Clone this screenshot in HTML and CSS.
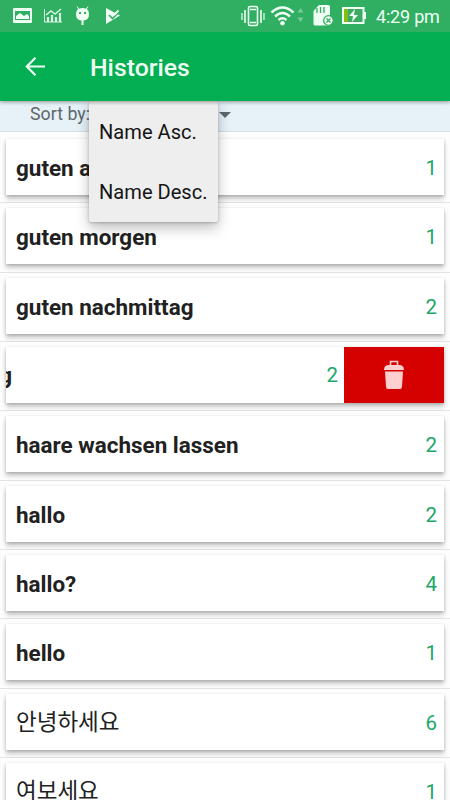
FILE: index.html
```html
<!DOCTYPE html>
<html lang="en">
<head>
<meta charset="utf-8">
<title>Histories</title>
<link rel="stylesheet" href="styles.css">
</head>
<body>
<header class="top">
  <div class="status">
    <svg class="status-left" width="125" height="32" viewBox="0 0 125 32" fill="#effff4">
      <path fill-rule="evenodd" d="M14 8h17q1 0 1 1v13q0 1-1 1H14q-1 0-1-1V9q0-1 1-1zm1 3v9h15v-9zM16 19v-3l4-3 4 3 3-2 2 2v3z" />
      <g fill="none" stroke="#d8f6e2"><path d="M44.5 9v13H62"/><path d="M48 22v-5m4 5v-7m4 7v-5m4 5v-9" stroke-width="2.2"/><path d="M46 15l5-4 4 3 6-5" stroke-width="1.5"/></g>
      <path fill-rule="evenodd" d="M76 14q0-6 6.500-6t6.500 6q0 6-5.500 6.500V25h-2v-4.500Q76 20 76 14zM79 12v2h2v-2zm5 0v2h2v-2z"/>
      <path d="M79 9.500l-2-3m9 3l2-3" stroke="#effff4"/>
      <path d="M106 8l14 7.500L106 24z"/><path d="M109 15l3.500 3.500 7-7" fill="none" stroke="#30ae61" stroke-width="1.600"/><path d="M114 15l4.500-4.500" stroke="#effff4" stroke-width="2"/>
    </svg>
    <svg class="status-right" width="130" height="32" viewBox="240 0 130 32">
      <g fill="none" stroke="#effff4" stroke-width="1.600"><rect x="248.500" y="6.500" width="9" height="19" rx="1.500"/><path d="M250 9.500h6m-6 13h6M245 10v13m16-13v13" /><path d="M242 13v7m22-7v7" stroke-width="1.200"/>
      <path d="M271.500 12.500q11-10 22 0M275 16.500q7.500-7 15 0M278.500 20q4-3.500 8 0" stroke-width="2.400"/></g>
      <circle cx="282.500" cy="23.300" r="2.200" fill="#effff4"/>
      <path d="M300.500 8l3 4.500h-6zm0 14l3-4.500h-6z" fill="#79cb98"/>
      <path d="M319 5h9q2 0 2 2v17q0 1.500-1.500 1.500H315q-1.500 0-1.500-1.500V11z" fill="#effff4"/>
      <path d="M317 8v5m3.500-6v6m3.500-6v6" stroke="#30ae61" stroke-width="1.300"/>
      <circle cx="328.500" cy="20.500" r="4.800" fill="#effff4" stroke="#30ae61" stroke-width="1.300"/><path d="M326.500 18.500l4 4m0-4l-4 4" stroke="#30ae61" stroke-width="1.300"/>
      <rect x="343" y="8" width="20.500" height="15" fill="#3daa61" stroke="#effff4" stroke-width="2"/><path d="M344 9h4v13h-4z" fill="#83bd12"/><path d="M364 12h2v7h-2z" fill="#effff4"/><path d="M355 9l-6 7h4l-1 6 6-7h-4z" fill="#effff4"/>
    </svg>
    <span class="clock">4:29 pm</span>
  </div>
  <div class="bar">
    <svg class="back" width="22" height="22" viewBox="0 0 22 22" fill="none" stroke="#effff4" stroke-width="2.200"><path d="M21 10.500H3M11.500 1.800L2.800 10.500l8.700 8.700"/></svg>
    <h1>Histories</h1>
  </div>
</header>
<section class="sort">
  <span>Sort by:</span><i class="caret"></i>
  <div class="menu"><div>Name Asc.</div><div>Name Desc.</div></div>
</section>
<main>
  <div class="row"><div class="card"><b>guten abend</b><span class="num">1</span></div></div>
  <div class="row"><div class="card"><b>guten morgen</b><span class="num">1</span></div></div>
  <div class="row"><div class="card"><b>guten nachmittag</b><span class="num">2</span></div></div>
  <div class="row"><div class="card swiped"><b>guten tag</b><span class="num">2</span><div class="delete"><svg width="22" height="30" viewBox="0 0 22 30" fill="#ffcece"><path d="M7.500 5V1.500h7V5" fill="none" stroke="#ffcece" stroke-width="1.600"/><path d="M1 10q0-5 5-5h10q5 0 5 5zM2 11.500h18l-1 15q-.2 2.500-2 2.500H5q-1.800 0-2-2.500z"/></svg></div></div></div>
  <div class="row"><div class="card"><b>haare wachsen lassen</b><span class="num">2</span></div></div>
  <div class="row"><div class="card"><b>hallo</b><span class="num">2</span></div></div>
  <div class="row"><div class="card"><b>hallo?</b><span class="num">4</span></div></div>
  <div class="row"><div class="card"><b>hello</b><span class="num">1</span></div></div>
  <div class="row"><div class="card"><span class="ko" lang="ko">안녕하세요</span><span class="num">6</span></div></div>
  <div class="row"><div class="card"><span class="ko" lang="ko">여보세요</span><span class="num">1</span></div></div>
</main>
</body>
</html>
```
FILE: styles.css
```css
* { box-sizing: border-box; }
body { margin: 0; width: 450px; height: 800px; overflow: hidden; background: #fff; font-family: Roboto, "Noto Sans CJK KR", sans-serif; display: flex; flex-direction: column; }
.top { flex: none; height: 101px; background: #04ae52; box-shadow: 0 1px 4px rgba(0,0,0,.4); z-index: 4; position: relative; }
.status { height: 32px; background: #30ae61; display: flex; align-items: center; }
.status-left { margin-right: 115px; }
.status svg { flex: none; }
.clock { color: #effff4; font-size: 18px; line-height: 32px; margin-left: 6px; padding-top: 1px; letter-spacing: -.2px; white-space: nowrap; }
.bar { height: 69px; display: flex; align-items: center; padding-left: 24px; }
.back { margin-right: 44px; }
h1 { margin: 3px 0 0; color: #effff4; font-size: 24.800px; font-weight: 500; line-height: 30px; }
.sort { flex: none; height: 31px; background: #e6f1f8; border-bottom: 1px solid #d4dde1; padding-left: 30px; display: flex; align-items: flex-start; position: relative; z-index: 3; color: #60676b; font-size: 17.800px; line-height: 26px; }
.sort span { width: 59px; white-space: nowrap; }
.caret { margin: 11px 0 0 130px; border: 6px solid transparent; border-top-color: #60676b; border-bottom: 0; }
.menu { position: absolute; left: 89px; top: 0; width: 129px; height: 121px; background: #eee; border-radius: 2px; box-shadow: 0 6px 14px rgba(0,0,0,.25), 0 1px 3px rgba(0,0,0,.22); color: #151515; font-size: 20.100px; line-height: 60px; padding: 1px 0 0 10px; white-space: nowrap; }
main { flex: none; padding-top: 2px; }
.row { height: 69.330px; padding: 5px 6px 0; border-bottom: 1px solid #e4e4e4; background: #fdfdfd; }
.card { height: 56px; background: #fff; box-shadow: 0 4px 5px rgba(0,0,0,.2), 0 1px 3px rgba(0,0,0,.2); display: flex; align-items: center; justify-content: space-between; padding: 2px 7px 0 10px; color: #212121; }
.card b { font-size: 22.450px; font-weight: 700; line-height: 30px; white-space: nowrap; }
.num { color: #1ca769; font-size: 20.500px; }
.ko { font-family: "Noto Sans CJK KR", sans-serif; font-size: 22.500px; line-height: 30px; padding-bottom: 6px; }
.swiped { padding: 0; }
.swiped b { margin-right: auto; width: 6px; display: flex; justify-content: flex-end; overflow: hidden; }
.card.swiped b { padding-top: 1px; }
.swiped .num { margin-right: 6px; }
.delete { align-self: stretch; width: 100px; background: #d50000; display: flex; align-items: center; justify-content: center; }
.delete svg { flex: none; }
.sort .caret { margin-left: 130px; }
.sort span + .caret { margin-left: 130px; }
```
